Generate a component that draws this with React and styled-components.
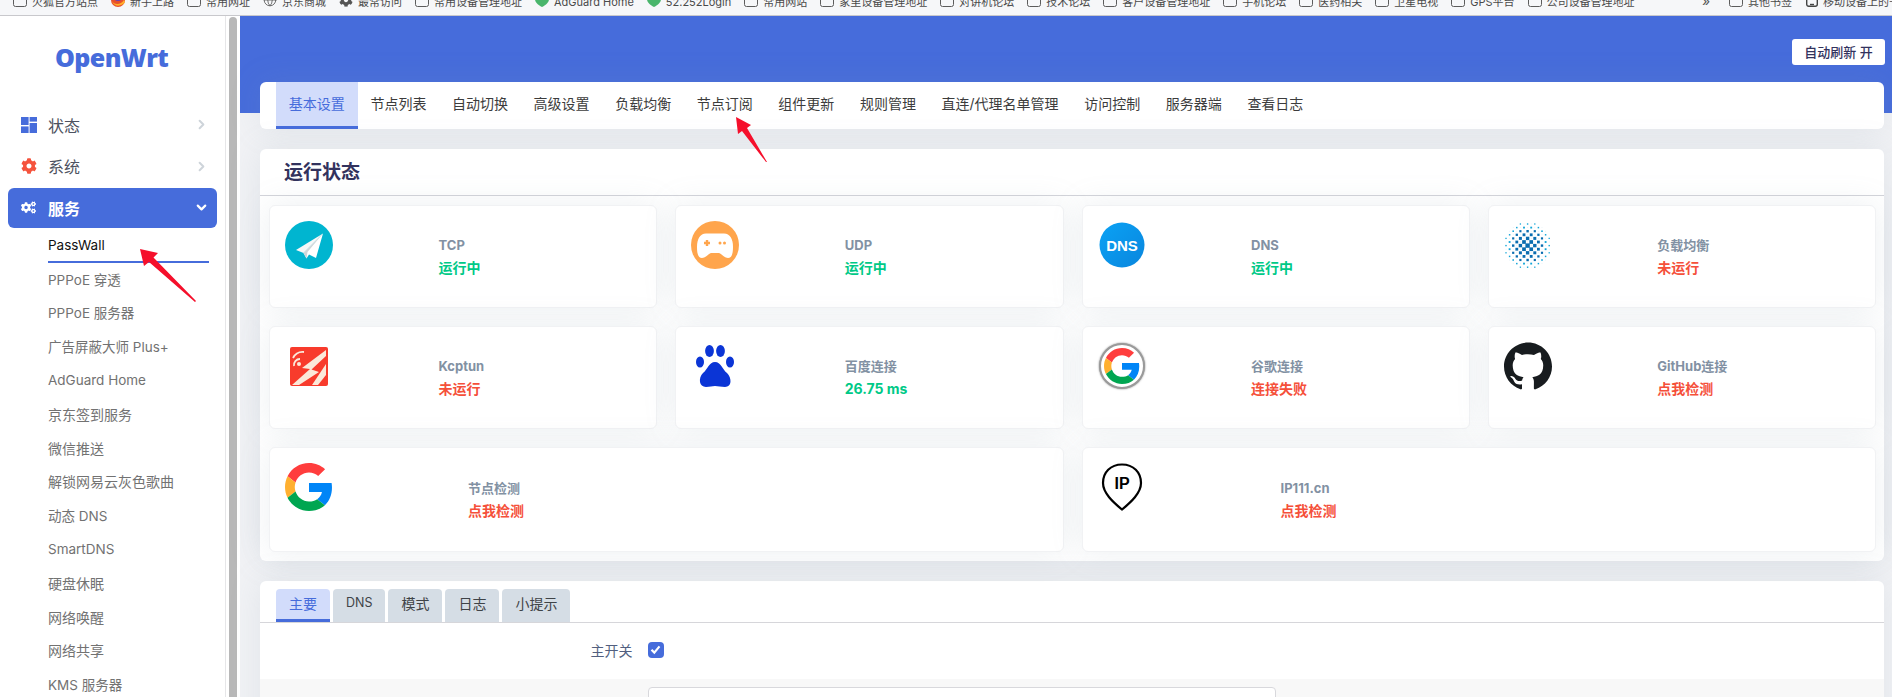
import styled, { createGlobalStyle } from 'styled-components';
import { ChevronRight, ChevronDown, Globe } from 'lucide-react';
import { FaCog, FaCogs } from 'react-icons/fa';
import { SiGithub } from 'react-icons/si';

const BLUE = '#466cdb';
const FONT = 'Inter, "Noto Sans CJK SC", "Noto Sans", sans-serif';

const GlobalStyle = createGlobalStyle`
    html, body { margin: 0; padding: 0; background: #fff; }
    body { font-family: ${FONT}; overflow: hidden; }
    * { box-sizing: border-box; }
`;

const Page = styled.div`
    position: relative;
    width: 1892px;
    height: 697px;
    overflow: hidden;
    display: flex;
    flex-direction: column;
`;

/* bookmarks bar, cut off at the top in the screenshot */
const BookmarkBar = styled.div`
    flex: 0 0 16px;
    background: #f6f7f9;
    border-bottom: 1px solid #c8c8cc;
    overflow: hidden;
`;
const BookmarkRow = styled.div`
    display: flex;
    gap: 13px;
    height: 14px;
    margin-top: -7px;
    padding-left: 13px;
`;
const BookmarkItem = styled.div`
    display: flex;
    align-items: center;
    gap: 5px;
    flex: none;
    font-size: 11px;
    line-height: 14px;
    color: #4a4a4a;
    white-space: nowrap;
    span { padding-top: 3px; }
    svg { flex: none; }
`;
const BookmarkEnd = styled.div`
    margin-left: auto;
    flex: 0 0 190px;
    min-width: 0;
    display: flex;
    align-items: center;
    gap: 14px;
`;
const More = styled.div`
    flex: none;
    width: 13px;
    font-size: 14px;
    line-height: 14px;
    padding-top: 2px;
    color: #555;
`;

const Shell = styled.div`
    flex: 1;
    display: flex;
    min-height: 0;
`;

const Sidebar = styled.aside`
    flex: 0 0 240px;
    display: flex;
    background: #fff;
`;
const SideMenu = styled.nav`
    flex: 0 0 226px;
    border-right: 1px solid #e6e6e8;
    padding: 0 8px;
`;
const ScrollRail = styled.div`
    flex: 1;
    padding: 1px 3px 0 3px;
`;
const ScrollThumb = styled.div`
    width: 8px;
    height: 100%;
    background: #b8b8b8;
    border-radius: 4px 4px 0 0;
`;
const Logo = styled.div`
    height: 88.5px;
    padding: 23px 0 0 47px;
    font-family: "Open Sans", sans-serif;
    font-size: 25px;
    font-weight: 800;
    line-height: 36px;
    letter-spacing: -0.6px;
    color: ${BLUE};
`;
const MenuItem = styled.div`
    display: flex;
    align-items: center;
    height: 40px;
    width: 209px;
    margin-bottom: 1.5px;
    padding: 0 8px 0 13px;
    border-radius: 6px;
    font-size: 16px;
    font-weight: ${(p) => (p.$active ? 600 : 400)};
    color: ${(p) => (p.$active ? '#fff' : '#4d5260')};
    background: ${(p) => (p.$active ? BLUE : 'transparent')};
`;
const MenuIcon = styled.span`
    flex: 0 0 27px;
    display: flex;
    align-items: center;
    color: ${(p) => p.$color || 'inherit'};
`;
const MenuLabel = styled.span`
    flex: 1;
`;
const SubItem = styled.div`
    height: 33.8px;
    width: 161px;
    margin-left: 40px;
    display: flex;
    align-items: center;
    font-size: ${(p) => (p.$cjk ? '14px' : '13.5px')};
    color: ${(p) => (p.$active ? '#111' : '#727272')};
    border-bottom: 2px solid ${(p) => (p.$active ? BLUE : 'transparent')};
`;

const Main = styled.main`
    flex: 1;
    min-width: 0;
    background: #f1f2f5;
`;
const Banner = styled.header`
    height: 97px;
    background: ${BLUE};
    display: flex;
    justify-content: flex-end;
    align-items: flex-start;
    padding: 23px 7px 0 0;
`;
const RefreshButton = styled.button`
    width: 93px;
    height: 26px;
    padding: 0 0 2px;
    border: 0;
    border-radius: 3px;
    background: #fff;
    color: #32325d;
    font-family: ${FONT};
    font-size: 13px;
    font-weight: 500;
`;
const Content = styled.div`
    padding: 0 8px 0 20px;
`;
const TabBar = styled.div`
    display: flex;
    height: 47px;
    margin-top: -31px;
    padding-left: 16px;
    background: #fff;
    border-radius: 6px;
    box-shadow: 0 0 32px rgba(136, 152, 170, 0.15);
`;
const TopTab = styled.div`
    display: flex;
    align-items: center;
    padding: 0 12.8px 2px;
    font-size: 14px;
    color: ${(p) => (p.$active ? BLUE : '#3c3c3c')};
    background: ${(p) => (p.$active ? '#d2dcfb' : 'transparent')};
    border-bottom: 3px solid ${(p) => (p.$active ? BLUE : 'transparent')};
    white-space: nowrap;
`;

const Panel = styled.section`
    margin-top: 20px;
    background: #fff;
    border-radius: 6px;
    box-shadow: 0 0 32px rgba(136, 152, 170, 0.15);
`;
const PanelTitle = styled.h3`
    margin: 0;
    height: 47px;
    padding: 0 24px 4px;
    display: flex;
    align-items: center;
    font-size: 19px;
    font-weight: 700;
    color: #32325d;
    border-bottom: 1px solid #d3d4da;
`;
const StatusGrid = styled.div`
    display: grid;
    grid-template-columns: repeat(4, 1fr);
    grid-template-rows: 103px 103px 105px;
    gap: 18px;
    padding: 9px 8px 9px 9px;
`;
const StatusCard = styled.div`
    grid-column: span ${(p) => (p.$wide ? 2 : 1)};
    display: grid;
    grid-template-columns: ${(p) => (p.$wide ? '183px' : '153.5px')} 1fr;
    padding: 15px;
    background: #fff;
    border: 1px solid #f1f2f4;
    border-radius: 6px;
    box-shadow: 0 0 32px rgba(136, 152, 170, 0.15);
`;
const IconBox = styled.div`
    width: 48px;
    height: 48px;
    display: flex;
    align-items: center;
    justify-content: center;
`;
const StatusText = styled.div`
    padding-top: ${(p) => (p.$wide ? '15px' : '14px')};
`;
const StatusLabel = styled.div`
    font-size: 13px;
    font-weight: 700;
    line-height: 20px;
    color: #8291a3;
`;
const StatusValue = styled.div`
    margin-top: 3px;
    font-size: 14px;
    font-weight: 700;
    line-height: 20px;
    color: ${(p) => (p.$ok ? '#00c987' : '#f5503a')};
`;

const SettingTabs = styled.div`
    display: flex;
    gap: 3px;
    height: 42px;
    padding: 8px 0 0 16px;
    border-bottom: 1px solid #d6d6da;
`;
const SettingTab = styled.div`
    height: 33px;
    padding: 0 13px 3px;
    display: flex;
    align-items: center;
    font-size: ${(p) => (p.$latin ? '12.5px' : '14px')};
    color: ${(p) => (p.$active ? BLUE : '#3f4347')};
    background: ${(p) => (p.$active ? '#d2dcfb' : '#d5dde5')};
    border-radius: 4px 4px 0 0;
    border-bottom: 3px solid ${(p) => (p.$active ? BLUE : '#d5dde5')};
`;
const FieldRow = styled.div`
    display: grid;
    grid-template-columns: 372.5px 1fr;
    column-gap: 15px;
    align-items: center;
    height: 56px;
    padding-bottom: 3px;
    font-size: 14px;
    color: #525f7f;
`;
const FieldLabel = styled.label`
    text-align: right;
`;
const CheckBox = styled.span`
    width: 16px;
    height: 16px;
    border-radius: 4px;
    background: ${BLUE};
    display: flex;
    align-items: center;
    justify-content: center;
`;
const InputRow = styled.div`
    height: 60px;
    padding: 8px 0 0 387.5px;
    background: #f8f8f8;
`;
const TextInput = styled.div`
    width: 628px;
    height: 34px;
    background: #fff;
    border: 1px solid #d8d8dc;
    border-radius: 4px;
`;

const ArrowLayer = styled.svg`
    position: absolute;
    inset: 0;
    pointer-events: none;
`;

const Folder = () => (
    <svg width="14" height="14" viewBox="0 0 14 14" fill="none" stroke="#5c5c5c" strokeWidth="1">
        <rect x="0.5" y="0.5" width="13" height="13" rx="2" />
    </svg>
);
const Shield = () => (
    <svg width="14" height="14" viewBox="0 0 14 14">
        <path d="M0 0H14V6C14 10 10 12.5 7 14C4 12.5 0 10 0 6Z" fill="#49b56b" />
        <path d="M3.5 1L6.2 4L10.5 -1" fill="none" stroke="#fff" strokeWidth="1.4" />
    </svg>
);
const FirefoxMark = () => (
    <svg width="14" height="14" viewBox="0 0 14 14">
        <circle cx="7" cy="7" r="7" fill="#e8502a" />
        <circle cx="7" cy="4" r="4" fill="#6a3fb5" />
        <path d="M1 8C3 12 10 12 13 7L14 9C12 13 3 15 1 8Z" fill="#ffb02a" />
    </svg>
);
const GearMark = () => <FaCog size={14} color="#555" />;
const PhoneMark = () => (
    <svg width="12" height="14" viewBox="0 0 12 14" fill="none" stroke="#444" strokeWidth="1.4">
        <rect x="0.7" y="0.7" width="10.6" height="12.6" rx="2" />
        <path d="M4 11.5H8" />
    </svg>
);

const bookmarks = [
    ['folder', '火狐官方站点'], ['firefox', '新手上路'], ['folder', '常用网址'], ['globe', '京东商城'],
    ['gear', '最常访问'], ['folder', '常用设备管理地址'], ['shield', 'AdGuard Home'], ['shield', '52.252Login'],
    ['folder', '常用网站'], ['folder', '家里设备管理地址'], ['folder', '对讲机论坛'], ['folder', '技术论坛'],
    ['folder', '客户设备管理地址'], ['folder', '手机论坛'], ['folder', '医药相关'], ['folder', '卫星电视'],
    ['folder', 'GPS平台'], ['folder', '公司设备管理地址'],
];
const markIcons = {
    folder: <Folder />,
    firefox: <FirefoxMark />,
    globe: <Globe size={14} color="#555" strokeWidth={1.4} />,
    gear: <GearMark />,
    shield: <Shield />,
};

const PlaneIcon = () => (
    <svg width="48" height="48" viewBox="0 0 48 48">
        <circle cx="24" cy="24" r="24" fill="#00b5d0" />
        <path d="M38 12.5L11 29L18.5 32Z" fill="#f7f7f7" />
        <path d="M38 12.5L18.5 32L21.5 37.5L24 33.5L31 37Z" fill="#fff" />
        <path d="M38 12.5L18.5 32L21.5 37.5L22.5 31Z" fill="#cfd6d8" />
    </svg>
);
const GameIcon = () => (
    <svg width="48" height="48" viewBox="0 0 48 48">
        <circle cx="24" cy="24" r="24" fill="#ffa54c" />
        <path d="M15 12.5H33C39 12.5 42 18 42 26C42 32 41 37 37 37C33 37 31 33 28 32H20C17 33 15 37 11 37C7 37 6 32 6 26C6 18 9 12.5 15 12.5Z" fill="#fff" />
        <path d="M13 22H19M16 19V25" stroke="#ffa54c" strokeWidth="2.4" />
        <circle cx="29" cy="22" r="1.5" fill="#ffa54c" />
        <circle cx="33.5" cy="22" r="1.5" fill="#ffa54c" />
    </svg>
);
const DnsIcon = () => (
    <svg width="46" height="46" viewBox="0 0 46 46">
        <defs>
            <linearGradient id="dnsFill" x1="0" y1="0" x2="1" y2="1">
                <stop offset="0" stopColor="#0aa2f5" />
                <stop offset="1" stopColor="#0a86dd" />
            </linearGradient>
        </defs>
        <circle cx="23" cy="23" r="22.5" fill="url(#dnsFill)" />
        <text x="23" y="28.5" textAnchor="middle" fontFamily="Liberation Sans, sans-serif" fontWeight="700" fontSize="15" fill="#fff">DNS</text>
    </svg>
);
const MeshIcon = () => {
    const cells = [];
    const pitch = 3.6;
    for (let r = 0; r < 13; r++) {
        for (let c = 0; c < 13; c++) {
            const dx = c - 6;
            const dy = r - 6;
            const d = Math.sqrt(dx * dx + dy * dy);
            if (d > 6.6) continue;
            const checker = (r + c) % 2 === 0;
            const size = checker ? Math.max(1.3, 4.4 - d * 0.5) : 0.6;
            const fill = checker ? (d < 4.5 ? '#0a6db0' : '#12a5d8') : '#c3dfee';
            const left = c * pitch + 2;
            const top = r * pitch + 2;
            cells.push(<rect key={`${r}-${c}`} x={left - size / 2} y={top - size / 2} width={size} height={size} fill={fill} />);
        }
    }
    return <svg width="47" height="47" viewBox="0 0 47 47">{cells}</svg>;
};
const KcptunIcon = () => (
    <svg width="38" height="39" viewBox="0 0 38 39">
        <rect width="38" height="39" rx="2" fill="#f83b2c" />
        <path d="M36 3L12 21L20 22L2 38H9L29 25L21.5 22.5L36 9Z" fill="#fbe9da" />
        <path d="M36 17L22 38H28L36 28Z" fill="#fbe9da" />
        <path d="M4 19A6 6 0 0 1 10 12M3 11A11 11 0 0 1 14 5" fill="none" stroke="#fbe9da" strokeWidth="1.8" />
        <circle cx="9" cy="17" r="2" fill="#fbe9da" />
    </svg>
);
const PawIcon = () => (
    <svg width="38" height="42" viewBox="0 0 38 42" fill="#0b35d6">
        <ellipse cx="13.5" cy="6" rx="4.4" ry="6" />
        <ellipse cx="24.5" cy="6" rx="4.4" ry="6" />
        <ellipse cx="4" cy="17" rx="4" ry="5.6" />
        <ellipse cx="34" cy="17" rx="4" ry="5.6" />
        <path d="M19 17C13 17 12 24 7 28C2 33 3 42 10 42C14 42 16 41 19 41C22 41 25 42 29 42C36 42 36 33 31 28C26 24 25 17 19 17Z" />
    </svg>
);
const GoogleG = ({ size = 48 }) => (
    <svg width={size} height={size} viewBox="0 0 48 48">
        <path fill="#ff3d3d" d="M24 9.5c3.54 0 6.71 1.22 9.21 3.6l6.85-6.85C35.9 2.38 30.47 0 24 0 14.62 0 6.51 5.38 2.56 13.22l7.98 6.19C12.43 13.72 17.74 9.5 24 9.5z" />
        <path fill="#0085f7" d="M46.98 24.55c0-1.57-.15-3.09-.38-4.55H24v9.02h12.94c-.58 2.96-2.26 5.48-4.78 7.18l7.73 6c4.51-4.18 7.09-10.36 7.09-17.65z" />
        <path fill="#ffb030" d="M10.53 28.59c-.48-1.45-.76-2.99-.76-4.59s.27-3.14.76-4.59l-7.98-6.19C.92 16.46 0 20.12 0 24c0 3.88.92 7.54 2.56 10.78l7.97-6.19z" />
        <path fill="#00a651" d="M24 48c6.48 0 11.93-2.13 15.89-5.81l-7.73-6c-2.15 1.45-4.92 2.3-8.16 2.3-6.26 0-11.57-4.22-13.47-9.91l-7.98 6.19C6.51 42.62 14.62 48 24 48z" />
    </svg>
);
const GoogleRing = styled.span`
    width: 46px;
    height: 46px;
    border-radius: 50%;
    background: #fff;
    border: 2px solid #9a9a9a;
    box-shadow: 0 0 2px #777;
    display: flex;
    align-items: center;
    justify-content: center;
`;
const PinIcon = () => (
    <svg width="44" height="48" viewBox="0 0 44 48">
        <path d="M22 1.5C10.5 1.5 3 9.5 3 20C3 30 13 39 22 46.5C31 39 41 30 41 20C41 9.5 33.5 1.5 22 1.5Z" fill="#fff" stroke="#000" strokeWidth="2.2" />
        <text x="22" y="25.5" textAnchor="middle" fontFamily="Liberation Sans, sans-serif" fontWeight="700" fontSize="16" fill="#000">IP</text>
    </svg>
);

const statusCards = [
    { icon: <PlaneIcon />, label: 'TCP', value: '运行中', ok: true },
    { icon: <GameIcon />, label: 'UDP', value: '运行中', ok: true },
    { icon: <DnsIcon />, label: 'DNS', value: '运行中', ok: true },
    { icon: <MeshIcon />, label: '负载均衡', value: '未运行' },
    { icon: <KcptunIcon />, label: 'Kcptun', value: '未运行' },
    { icon: <PawIcon />, label: '百度连接', value: '26.75 ms', ok: true },
    { icon: <GoogleRing><GoogleG size={36} /></GoogleRing>, label: '谷歌连接', value: '连接失败' },
    { icon: <SiGithub size={48} color="#181c1f" />, label: 'GitHub连接', value: '点我检测' },
    { icon: <GoogleG />, label: '节点检测', value: '点我检测', wide: true },
    { icon: <PinIcon />, label: 'IP111.cn', value: '点我检测', wide: true },
];

const topTabs = ['基本设置', '节点列表', '自动切换', '高级设置', '负载均衡', '节点订阅', '组件更新', '规则管理', '直连/代理名单管理', '访问控制', '服务器端', '查看日志'];
const settingTabs = ['主要', 'DNS', '模式', '日志', '小提示'];
const subMenu = ['PassWall', 'PPPoE 穿透', 'PPPoE 服务器', '广告屏蔽大师 Plus+', 'AdGuard Home', '京东签到服务', '微信推送', '解锁网易云灰色歌曲', '动态 DNS', 'SmartDNS', '硬盘休眠', '网络唤醒', '网络共享', 'KMS 服务器'];
const isCjkOnly = (name) => !/[A-Za-z]/.test(name);

export default function App() {
    return (
        <Page>
            <GlobalStyle />
            <BookmarkBar>
                <BookmarkRow>
                    {bookmarks.map(([icon, name]) => (
                        <BookmarkItem key={name}>{markIcons[icon]}<span>{name}</span></BookmarkItem>
                    ))}
                    <BookmarkEnd>
                        <More>»</More>
                        <BookmarkItem><Folder /><span>其他书签</span></BookmarkItem>
                        <BookmarkItem><PhoneMark /><span>移动设备上的书签</span></BookmarkItem>
                    </BookmarkEnd>
                </BookmarkRow>
            </BookmarkBar>
            <Shell>
                <Sidebar>
                    <SideMenu>
                        <Logo>OpenWrt</Logo>
                        <MenuItem>
                            <MenuIcon>
                                <svg width="16" height="16" viewBox="0 0 16 16" fill={BLUE}>
                                    <rect x="0" y="0" width="7.6" height="8" />
                                    <rect x="8.6" y="0" width="7.4" height="4.6" />
                                    <rect x="8.6" y="6" width="7.4" height="10" />
                                    <rect x="0" y="9.4" width="7.6" height="6.6" />
                                </svg>
                            </MenuIcon>
                            <MenuLabel>状态</MenuLabel>
                            <ChevronRight size={15} color="#ced4da" strokeWidth={3.2} />
                        </MenuItem>
                        <MenuItem>
                            <MenuIcon $color="#f5533d"><FaCog size={16} /></MenuIcon>
                            <MenuLabel>系统</MenuLabel>
                            <ChevronRight size={15} color="#ced4da" strokeWidth={3.2} />
                        </MenuItem>
                        <MenuItem $active>
                            <MenuIcon><FaCogs size={15} /></MenuIcon>
                            <MenuLabel>服务</MenuLabel>
                            <ChevronDown size={15} color="#fff" strokeWidth={3.5} />
                        </MenuItem>
                        {subMenu.map((name, i) => (
                            <SubItem key={name} $active={i === 0} $cjk={isCjkOnly(name)}>{name}</SubItem>
                        ))}
                    </SideMenu>
                    <ScrollRail><ScrollThumb /></ScrollRail>
                </Sidebar>
                <Main>
                    <Banner><RefreshButton>自动刷新 开</RefreshButton></Banner>
                    <Content>
                        <TabBar>
                            {topTabs.map((name, i) => (
                                <TopTab key={name} $active={i === 0}>{name}</TopTab>
                            ))}
                        </TabBar>
                        <Panel>
                            <PanelTitle>运行状态</PanelTitle>
                            <StatusGrid>
                                {statusCards.map((card) => (
                                    <StatusCard key={card.label} $wide={card.wide}>
                                        <IconBox>{card.icon}</IconBox>
                                        <StatusText $wide={card.wide}>
                                            <StatusLabel>{card.label}</StatusLabel>
                                            <StatusValue $ok={card.ok}>{card.value}</StatusValue>
                                        </StatusText>
                                    </StatusCard>
                                ))}
                            </StatusGrid>
                        </Panel>
                        <Panel>
                            <SettingTabs>
                                {settingTabs.map((name, i) => (
                                    <SettingTab key={name} $active={i === 0} $latin={name === 'DNS'}>{name}</SettingTab>
                                ))}
                            </SettingTabs>
                            <FieldRow>
                                <FieldLabel>主开关</FieldLabel>
                                <CheckBox>
                                    <svg width="11" height="11" viewBox="0 0 11 11" fill="none" stroke="#fff" strokeWidth="2.2">
                                        <path d="M1.5 5.8L4.3 8.6L9.5 2.4" />
                                    </svg>
                                </CheckBox>
                            </FieldRow>
                            <InputRow><TextInput /></InputRow>
                        </Panel>
                    </Content>
                </Main>
            </Shell>
            {/* red annotation arrows drawn over the screenshot */}
            <ArrowLayer width="1892" height="697" viewBox="0 0 1892 697" fill="#f50f2b">
                <polygon points="140,249 158,253 153.5,257.5 196,301 195,302 149,262 144,266" />
                <polygon points="736,117 751,125 747,128 767,162 766,162 742,131 738,134" />
            </ArrowLayer>
        </Page>
    );
}
